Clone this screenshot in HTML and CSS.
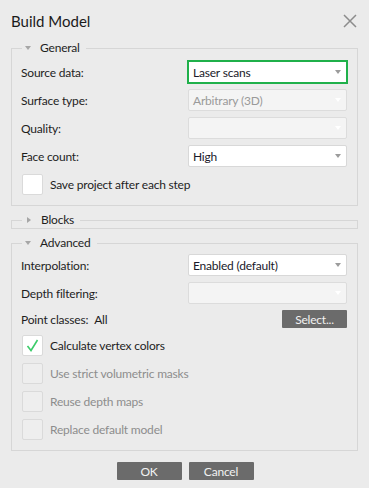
FILE: index.html
```html
<!DOCTYPE html>
<html>
<head>
<meta charset="utf-8">
<link rel="stylesheet" href="styles.css">
</head>
<body>
<div class="dialog">
  <header class="titlebar">
    <span class="title">Build Model</span>
    <svg class="close" width="14" height="14" viewBox="0 0 14 14"><path d="M1 1L13 13M13 1L1 13" stroke="#8c8c8c" stroke-width="1.5" fill="none"/></svg>
  </header>

  <fieldset class="group">
    <legend><span class="tri down"></span>General</legend>
    <div class="row">
      <span class="label">Source data:</span>
      <div class="combo focus"><span>Laser scans</span><span class="arrow"></span></div>
    </div>
    <div class="row">
      <span class="label">Surface type:</span>
      <div class="combo disabled"><span>Arbitrary (3D)</span><span class="arrow"></span></div>
    </div>
    <div class="row">
      <span class="label">Quality:</span>
      <div class="combo disabled"><span></span><span class="arrow"></span></div>
    </div>
    <div class="row">
      <span class="label">Face count:</span>
      <div class="combo"><span>High</span><span class="arrow"></span></div>
    </div>
    <div class="check">
      <span class="box"></span><span>Save project after each step</span>
    </div>
  </fieldset>

  <fieldset class="group collapsed">
    <legend><span class="tri right"></span>Blocks</legend>
  </fieldset>

  <fieldset class="group advanced">
    <legend><span class="tri down"></span>Advanced</legend>
    <div class="row">
      <span class="label">Interpolation:</span>
      <div class="combo"><span>Enabled (default)</span><span class="arrow"></span></div>
    </div>
    <div class="row">
      <span class="label">Depth filtering:</span>
      <div class="combo disabled"><span></span><span class="arrow"></span></div>
    </div>
    <div class="row points">
      <span class="label">Point classes:<span class="value">All</span></span>
      <button class="btn select">Select...</button>
    </div>
    <div class="check">
      <span class="box"><svg width="13" height="13" viewBox="0 0 13 13"><path d="M1.5 7L5 11.5L11.5 1" stroke="#3ccc6a" stroke-width="1.6" fill="none"/></svg></span><span>Calculate vertex colors</span>
    </div>
    <div class="check disabled">
      <span class="box"></span><span>Use strict volumetric masks</span>
    </div>
    <div class="check disabled">
      <span class="box"></span><span>Reuse depth maps</span>
    </div>
    <div class="check disabled">
      <span class="box"></span><span>Replace default model</span>
    </div>
  </fieldset>

  <div class="buttons">
    <button class="btn">OK</button>
    <button class="btn">Cancel</button>
  </div>
</div>
</body>
</html>
```

FILE: styles.css
```css
html, body {
  margin: 0;
  padding: 0;
  background: #ebebeb;
}
body {
  font-family: Lato, "Liberation Sans", sans-serif;
  font-size: 12px;
  letter-spacing: -0.2px;
  color: #1e1e1e;
}
.dialog {
  width: 369px;
  height: 488px;
  display: flex;
  flex-direction: column;
}
.titlebar {
  height: 40px;
  display: flex;
  align-items: center;
  justify-content: space-between;
  padding: 0 12px 0 11px;
  box-sizing: border-box;
}
.title {
  font-size: 15px;
  letter-spacing: 0;
  color: #1a1a1a;
  margin-top: 1px;
}
.close {
  margin-top: 2px;
}
.group {
  margin: 0 11px;
  border: 1px solid #d6d6d6;
  padding: 5px 10px 10px 9px;
  min-width: 0;
  display: flex;
  flex-direction: column;
  gap: 6px;
}
.group legend {
  margin-left: 1px;
  padding: 0 6px 0 3px;
  height: 16px;
  line-height: 16px;
  display: flex;
  align-items: center;
  color: #1e1e1e;
}
.tri {
  display: inline-block;
  width: 0;
  height: 0;
  margin-right: 9px;
}
.tri.down {
  border-left: 3.5px solid transparent;
  border-right: 3.5px solid transparent;
  border-top: 4px solid #a6a6a6;
}
.tri.right {
  border-top: 3.5px solid transparent;
  border-bottom: 3.5px solid transparent;
  border-left: 4px solid #a6a6a6;
  margin-left: 2px;
  margin-right: 10px;
}
.group.collapsed {
  margin-top: 6px;
  padding: 0;
}
.group.collapsed legend {
  margin-left: 10px;
}
.group.advanced {
  margin-top: 6px;
  padding-top: 3px;
}
.row {
  display: grid;
  grid-template-columns: 1fr 159px;
  align-items: center;
  height: 22px;
}
.label {
  display: flex;
  align-items: center;
}
.value {
  margin-left: 6px;
}
.combo {
  height: 22px;
  box-sizing: border-box;
  border: 1px solid #d8d8d8;
  border-radius: 2px;
  background: #ffffff;
  display: flex;
  align-items: center;
  justify-content: space-between;
  padding: 0 5px 0 4px;
  color: #1a1a2a;
}
.combo.focus {
  border-color: #1fb04a;
  box-shadow: 0 0 0 1px #1fb04a;
  border-radius: 0;
}
.combo.disabled {
  background: #f4f4f4;
  color: #9a9a9a;
  border-color: #dcdcdc;
}
.arrow {
  width: 0;
  height: 0;
  border-left: 3.5px solid transparent;
  border-right: 3.5px solid transparent;
  border-top: 4px solid #9c9c9c;
}
.combo.disabled .arrow {
  border-top-color: #ffffff;
}
.row.points {
  height: 18px;
  grid-template-columns: 1fr 65px;
}
.btn {
  font-family: inherit;
  font-size: 12px;
  letter-spacing: -0.2px;
  background: #6b6b6b;
  color: #f2f2f2;
  border: none;
  border-radius: 1px;
  height: 18px;
  padding: 0;
}
.check {
  display: flex;
  align-items: center;
  height: 22px;
  padding-left: 1px;
}
.box {
  width: 21px;
  height: 21px;
  box-sizing: border-box;
  border: 1px solid #dadada;
  border-radius: 2px;
  background: #ffffff;
  margin-right: 7px;
  display: flex;
  align-items: center;
  justify-content: center;
}
.check.disabled {
  color: #8d8d8d;
}
.check.disabled .box {
  background: #eeeeee;
}
.buttons {
  display: flex;
  justify-content: center;
  gap: 6px;
  margin-top: 11px;
}
.buttons .btn {
  width: 65px;
  margin-left: 1px;
}
```
